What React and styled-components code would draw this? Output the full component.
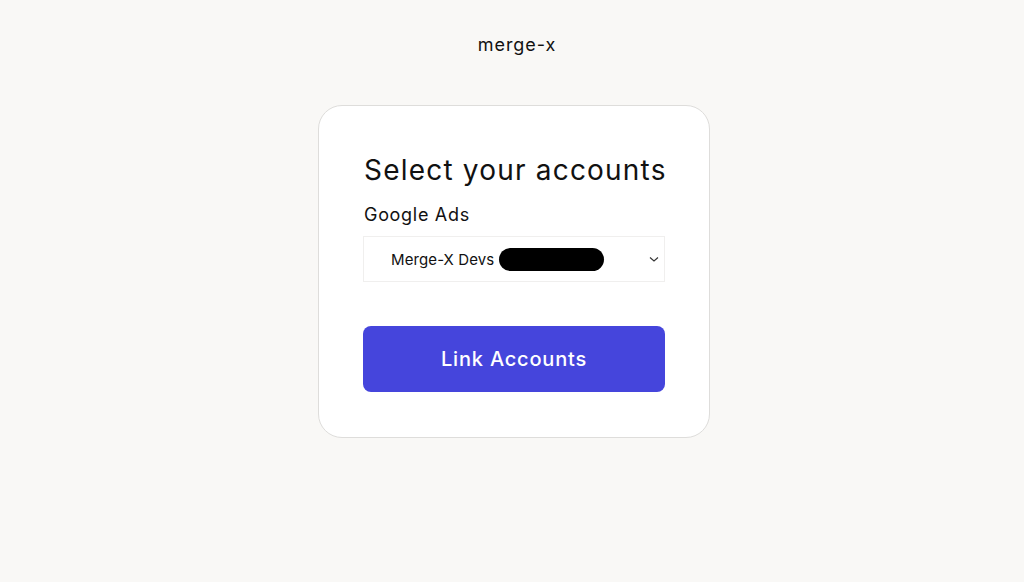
import React, { useState } from "react";
import styled, { createGlobalStyle } from "styled-components";

const GlobalStyle = createGlobalStyle`
  html, body {
    margin: 0;
    padding: 0;
    background: #f9f8f6;
    font-family: "Inter", "Liberation Sans", sans-serif;
    color: #111;
  }
`;

const Page = styled.div`
  min-height: 582px;
  display: flex;
  flex-direction: column;
  align-items: center;
  padding: 33px 0 0 4px;
  box-sizing: border-box;
`;

const Brand = styled.div`
  margin-left: 6px;
  font-size: 18px;
  letter-spacing: 0.9px;
  color: #111;
  line-height: 24px;
`;

const Card = styled.div`
  margin-top: 48px;
  width: 392px;
  box-sizing: border-box;
  background: #fff;
  border: 1px solid #dedddb;
  border-radius: 24px;
  padding: 48px 44px 45px 44px;
  display: flex;
  flex-direction: column;
`;

const Title = styled.h1`
  margin: 0 0 0 1px;
  font-size: 28px;
  font-weight: 400;
  line-height: 32px;
  letter-spacing: 1.2px;
  white-space: nowrap;
`;

const Label = styled.label`
  margin: 17px 0 0 1px;
  font-size: 18px;
  line-height: 24px;
  letter-spacing: 0.7px;
`;

const SelectBox = styled.div`
  margin-top: 9px;
  height: 46px;
  border: 1px solid #f0efee;
  box-sizing: border-box;
  display: flex;
  align-items: center;
  padding: 0 4px 0 27px;
  font-size: 15px;
  cursor: pointer;
`;

const Option = styled.span`
  color: #111;
  letter-spacing: 0.1px;
`;

const Redacted = styled.span`
  display: inline-block;
  margin-left: 5px;
  width: 105px;
  height: 23px;
  border-radius: 12px;
  background: #000;
`;

const Chevron = styled.svg`
  margin-left: auto;
`;

const Button = styled.button`
  margin-top: 44px;
  height: 66px;
  border: none;
  border-radius: 8px;
  background: #4545dc;
  color: #fff;
  font-family: inherit;
  font-size: 20px;
  font-weight: 500;
  letter-spacing: 0.8px;
  cursor: pointer;
`;

export default function App() {
  const [account] = useState("Merge-X Devs");
  return (
    <>
      <GlobalStyle />
      <Page>
        <Brand>merge-x</Brand>
        <Card>
          <Title>Select your accounts</Title>
          <Label>Google Ads</Label>
          <SelectBox>
            <Option>{account}</Option>
            <Redacted />
            <Chevron width="12" height="12" viewBox="0 0 12 12">
              <path d="M2 4.5 L6 8 L10 4.5" fill="none" stroke="#333" strokeWidth="1.1" />
            </Chevron>
          </SelectBox>
          <Button>Link Accounts</Button>
        </Card>
      </Page>
    </>
  );
}
